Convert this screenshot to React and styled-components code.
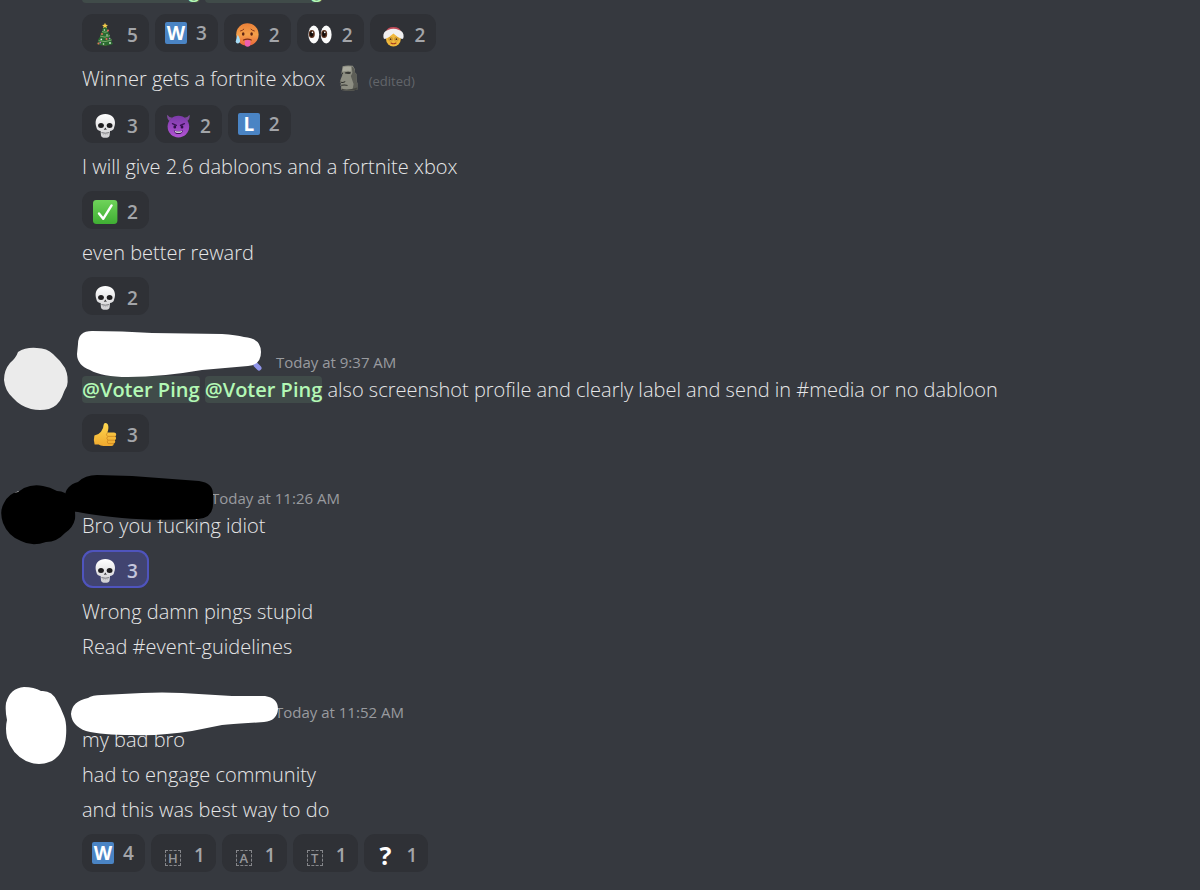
import React from 'react'
import styled, { createGlobalStyle } from 'styled-components'

const GlobalStyle = createGlobalStyle`
  * { box-sizing: border-box; }
  body { margin: 0; background: #36393f; color: #e6e7e8; font-family: 'Open Sans', sans-serif; font-size: 20px; }
`

// emoji

const Glyph = styled.svg`
  display: block;
  flex: none;
  width: 26px;
  height: 26px;
`

const Tree = () => (
  <Glyph viewBox='0 0 26 26'>
    <rect x='11.5' y='20' width='3' height='4' fill='#7a4a2a' />
    <path d='M13 3 L16 8 L15.3 8.4 L18 13 L17 13.4 L20 18 L19 18.6 L21 22 Q13 25.5 4.5 22 L7 18.4 L6 17.8 L9 13.2 L8 12.6 L10.6 8.4 L10 8 Z' fill='#2b6b31' />
    <path d='M10 9.5 Q13 11 16 9.5 M8 14 Q13 16.5 18 13.6 M6.5 18.6 Q13 21 19.6 18' stroke='#77a968' strokeWidth='1' fill='none' />
    <path d='M13 .8 L13.9 2.7 L16 2.9 L14.4 4.2 L14.9 6.2 L13 5.1 L11.1 6.2 L11.6 4.2 L10 2.9 L12.1 2.7 Z' fill='#f6cc4b' />
    <g fill='#e9685b'><circle cx='16' cy='8.5' r='1' /><circle cx='10' cy='12' r='1' /><circle cx='14.5' cy='17' r='1' /><circle cx='6.5' cy='21.5' r='1' /></g>
    <g fill='#d8ead7'><circle cx='12.4' cy='8' r='.8' /><circle cx='15' cy='13' r='.8' /><circle cx='9.3' cy='17.3' r='.9' /><circle cx='18' cy='21' r='.9' /><circle cx='11.5' cy='22' r='.8' /></g>
    <g fill='#c36dd0'><circle cx='17.6' cy='16.6' r='.8' /><circle cx='8.3' cy='20.6' r='.8' /></g>
  </Glyph>
)

const LetterTile = styled.span`
  display: flex;
  flex: none;
  align-items: center;
  justify-content: center;
  width: 22px;
  height: 22px;
  border-radius: 2px;
  background: #4a84c4;
  color: #fff;
  font-size: 19px;
  font-weight: 700;
  line-height: 22px;
`

const Hot = () => (
  <Glyph viewBox='0 0 26 26'>
    <defs>
      <linearGradient id='hot' x1='0' y1='0' x2='0' y2='1'>
        <stop offset='0' stopColor='#eb8038' /><stop offset='.5' stopColor='#f5a04a' /><stop offset='1' stopColor='#e8663a' />
      </linearGradient>
    </defs>
    <circle cx='13.4' cy='12.5' r='11.2' fill='url(#hot)' />
    <path d='M6.5 9 Q8.5 8.6 9.8 7.2 M17 7.2 Q18.3 8.6 20.3 9' stroke='#8a3a1c' strokeWidth='1' fill='none' strokeLinecap='round' />
    <ellipse cx='9.2' cy='12' rx='1.3' ry='1.8' fill='#5e2414' />
    <ellipse cx='17.6' cy='12' rx='1.3' ry='1.8' fill='#5e2414' />
    <path d='M9.6 18 Q13.4 16.2 17.2 18' stroke='#7d2d17' strokeWidth='1.3' fill='none' strokeLinecap='round' />
    <path d='M10.8 18.4 Q13.5 17.4 16.4 18.4 V21.5 Q16.4 24.8 13.6 24.8 Q10.8 24.8 10.8 21.5 Z' fill='#ee5fb0' />
    <path d='M3.8 12.8 Q6.3 17 6 19.2 Q5.6 21.6 3.8 21.6 Q1.8 21.4 1.8 19.2 Q2 16.8 3.8 12.8 Z' fill='#a6dcf6' />
  </Glyph>
)

const Eyes = () => (
  <Glyph viewBox='0 0 26 26'>
    <ellipse cx='6.8' cy='12.5' rx='5.4' ry='9' fill='#fbfbfb' />
    <ellipse cx='19.2' cy='12.5' rx='5.4' ry='9' fill='#fbfbfb' />
    <ellipse cx='4.8' cy='12' rx='3' ry='4' fill='#5e3421' />
    <ellipse cx='17.2' cy='12' rx='3' ry='4' fill='#5e3421' />
    <ellipse cx='4.6' cy='12' rx='1.8' ry='2.7' fill='#120c0a' />
    <ellipse cx='17' cy='12' rx='1.8' ry='2.7' fill='#120c0a' />
    <circle cx='5.4' cy='10.4' r='.8' fill='#fff' />
    <circle cx='17.8' cy='10.4' r='.8' fill='#fff' />
  </Glyph>
)

const MrsClaus = () => (
  <Glyph viewBox='0 0 26 26'>
    <path d='M6 10 Q7 5 13.4 5 Q20 5 21 10 Z' fill='#c04a58' />
    <circle cx='13.4' cy='17' r='7.4' fill='#f0b83c' />
    <path d='M3.4 15 Q2.8 9.6 8 8 Q13.4 5.4 19 8 Q24 9.6 23.6 15 Q23.4 17.4 21.4 16.8 Q17.4 15.4 13.4 11.6 Q9.6 15.4 5.6 16.8 Q3.6 17.4 3.4 15 Z' fill='#f0eff0' />
    <circle cx='10.6' cy='17.2' r='2' fill='none' stroke='#b8862c' strokeWidth='.6' />
    <circle cx='16.4' cy='17.2' r='2' fill='none' stroke='#b8862c' strokeWidth='.6' />
    <circle cx='10.6' cy='17.2' r='.9' fill='#52321a' />
    <circle cx='16.4' cy='17.2' r='.9' fill='#52321a' />
    <path d='M11 21 Q13.5 22.6 16 21' stroke='#a3391f' strokeWidth='1.1' fill='none' strokeLinecap='round' />
  </Glyph>
)

const Skull = () => (
  <Glyph viewBox='0 0 26 26'>
    <defs>
      <linearGradient id='bone' x1='0' y1='0' x2='0' y2='1'>
        <stop offset='0' stopColor='#ffffff' /><stop offset='1' stopColor='#cfcfd2' />
      </linearGradient>
    </defs>
    <path d='M13.3 1 C19.4 1 23 4.8 23 9.8 C23 12.2 22.4 13.4 22 15 C21.6 17 20 17.6 18 18 L17.6 22.4 Q17.2 24.8 13.3 24.8 Q9.4 24.8 9 22.4 L8.6 18 C6.6 17.6 5 17 4.6 15 C4.2 13.4 3.6 12.2 3.6 9.8 C3.6 4.8 7.2 1 13.3 1 Z' fill='url(#bone)' />
    <ellipse cx='9' cy='12.6' rx='2.9' ry='2.5' fill='#1e1d1f' />
    <ellipse cx='17.6' cy='12.6' rx='2.9' ry='2.5' fill='#1e1d1f' />
    <path d='M13.3 14.6 L14.8 17 L13.3 16.6 L11.8 17 Z' fill='#2b2a2c' />
    <path d='M9.4 19.6 Q13.3 20.8 17.2 19.6' stroke='#77777b' strokeWidth='1' fill='none' />
    <path d='M11.4 20.4 V22 M13.3 20.6 V22.2 M15.2 20.4 V22' stroke='#a2a2a6' strokeWidth='.6' />
  </Glyph>
)

const Devil = () => (
  <Glyph viewBox='0 0 26 26'>
    <defs>
      <linearGradient id='devil' x1='0' y1='0' x2='0' y2='1'>
        <stop offset='0' stopColor='#7b3aa9' /><stop offset='1' stopColor='#b253d4' />
      </linearGradient>
    </defs>
    <path d='M2.2 1.8 Q1.6 5.6 4.4 8 L7.4 4.8 Q4 4.6 2.2 1.8 Z M24.6 1.8 Q25.2 5.6 22.4 8 L19.4 4.8 Q22.8 4.6 24.6 1.8 Z' fill='#7d4a9c' />
    <circle cx='13.4' cy='13.6' r='10.8' fill='url(#devil)' />
    <path d='M7.4 10.6 L11.4 12.4 M19.4 10.6 L15.4 12.4' stroke='#3a1257' strokeWidth='1.2' strokeLinecap='round' />
    <ellipse cx='9.8' cy='13.9' rx='1.4' ry='1.7' fill='#2f0f49' />
    <ellipse cx='17' cy='13.9' rx='1.4' ry='1.7' fill='#2f0f49' />
    <path d='M8.8 17.4 Q13.4 18.8 18 17.4 Q17.2 21 13.4 21 Q9.6 21 8.8 17.4 Z' fill='#3a1257' />
    <path d='M9.6 18 Q13.4 19 17.2 18 L16.6 19.2 Q13.4 20.2 10.2 19.2 Z' fill='#fff' />
  </Glyph>
)

const Check = () => (
  <Glyph viewBox='0 0 26 26'>
    <defs>
      <linearGradient id='check' x1='0' y1='0' x2='0' y2='1'>
        <stop offset='0' stopColor='#6fd35a' /><stop offset='1' stopColor='#3fae33' />
      </linearGradient>
    </defs>
    <rect x='1' y='1' width='24.4' height='24' rx='3.4' fill='url(#check)' />
    <path d='M7 14.4 L11.2 19.8 L19.6 6.4' stroke='#fff' strokeWidth='2.4' fill='none' strokeLinecap='round' strokeLinejoin='round' />
  </Glyph>
)

const Thumb = () => (
  <Glyph viewBox='0 0 26 26'>
    <defs>
      <linearGradient id='thumb' x1='0' y1='0' x2='0' y2='1'>
        <stop offset='0' stopColor='#ffd850' /><stop offset='1' stopColor='#f0a92e' />
      </linearGradient>
    </defs>
    <path d='M2.4 13.4 Q6.6 13 9 9.8 Q11.6 6.6 11.6 3 Q11.8 .8 13.8 1 Q16.6 1.4 16.4 6 Q16.2 8.6 15.4 10.6 H22 Q24.2 10.8 24.2 12.6 Q24.2 13.8 23.2 14.4 Q24.4 15.2 24 16.8 Q23.8 17.8 22.8 18.2 Q23.6 19.2 23 20.4 Q22.6 21.4 21.6 21.6 Q22 23.8 19.4 24 H11.4 Q8.4 24 6.6 22.6 H2.6 Q1.2 18 2.4 13.4 Z' fill='url(#thumb)' />
    <path d='M16 14.4 H23.2 M16 18.2 H22.8 M16 21.6 H21.6 M15.4 10.6 Q13.4 13 15.6 14.4 Q14 16.4 15.8 18.2 Q14.6 20 16 21.6' stroke='#cd8620' strokeWidth='.8' fill='none' />
  </Glyph>
)

const MoaiGlyph = styled.svg`
  width: 20px;
  height: 26px;
  margin: 3px 4px 0 9px;
  vertical-align: -5px;
`

const Moai = () => (
  <MoaiGlyph viewBox='0 0 20 26'>
    <path d='M3.6 1.2 Q8 -.2 13.8 .8 Q16 3 16 7.6 L17.4 9 L17.6 16.4 L18.4 18 L18.4 24.4 Q11 26.8 2.6 25 Q1.6 23.4 2.4 21.8 L1.4 20.2 L2 18.6 L.8 17.4 Q1.8 13.4 3.4 10 L2.4 8.2 Z' fill='#8d8e82' />
    <path d='M12.6 1 Q16 3 16 7.6 L17.4 9 L17.6 16.4 L18.4 18 V24.4 L13.4 25.6 L14.6 19 L11.8 11 L13.4 8 Z' fill='#5d5e57' />
    <path d='M4.2 2.2 Q8 1 12 1.8 L11.8 6 Q7 5.2 3.6 6.6 Z' fill='#a9aa9d' />
    <path d='M5.6 7.4 Q9 6.2 12 7.2 L11.4 8.8 Q8.6 9.4 6 8.6 Z M2.8 7.8 L4.2 7.6 L4 9 L3.2 9.4 Z' fill='#383935' />
    <path d='M1 16.6 Q3.6 17.8 6.4 16 L6 17.2 Q3.6 18.4 1.4 17.6 Z M2.2 19.8 Q6 19 8.8 20 L8.4 20.8 Q5 20.4 2.2 20.8 Z' fill='#2c2d2a' />
    <path d='M2.6 23.6 Q8 26 18.4 22.4 V24.4 Q11 26.8 2.6 25 Z' fill='#454641' />
  </MoaiGlyph>
)

const BoxedLetter = styled.span`
  display: flex;
  flex: none;
  align-items: center;
  justify-content: center;
  width: 16px;
  height: 16px;
  margin: 6px 4px 0;
  border: 1px dashed #85868a;
  color: #96979b;
  font-size: 13px;
  line-height: 14px;
`

const Question = styled.span`
  flex: none;
  width: 24px;
  color: #fff;
  font-size: 25px;
  font-weight: 700;
  line-height: 26px;
  text-align: center;
`

// chat

const Chat = styled.main`
  min-height: 100vh;
  overflow: hidden;
  background: #36393f;
`

const Group = styled.section`
  display: grid;
  grid-template-columns: 82px 1fr;
  margin-top: ${({ $space }) => $space}px;
`

const Avatar = styled.svg`
  display: block;
  width: 82px;
  height: 80px;
  overflow: visible;
`

const Body = styled.div`
  grid-column: 2;
  min-width: 0;
`

const Header = styled.header`
  display: flex;
  align-items: center;
  height: 25px;
`

const Name = styled.span`
  position: relative;
  flex: none;
  align-self: stretch;
  width: ${({ $width }) => $width}px;
`

const Scribble = styled.svg`
  position: absolute;
  top: 0;
  left: 0;
  width: 100%;
  height: 100%;
  overflow: visible;
`

const Time = styled.time`
  padding-top: 3px;
  color: #999b9f;
  font-size: 15px;
  line-height: 22px;
`

const Message = styled.article`
  padding: 3px 0 4px;
`

const Text = styled.p`
  margin: 0;
  font-weight: 300;
  line-height: 28px;
`

const Mention = styled.a`
  border-radius: 4px;
  background: #404b49;
  color: #b3f8b5;
  font-weight: 600;
  text-decoration: none;
`

const Edited = styled.small`
  color: #62656a;
  font-size: 13px;
  font-weight: 400;
`

const Reactions = styled.div`
  display: flex;
  flex-wrap: wrap;
  gap: 6px;
  margin: 10px 0 3px;
`

const Pill = styled.button`
  display: flex;
  align-items: center;
  gap: 9px;
  height: 38px;
  padding: ${({ $tile }) => $tile ? 0 : 3}px 11px 0 10px;
  border: 0;
  border-radius: 11px;
  background: ${({ $active }) => $active ? '#414470' : '#2f3136'};
  box-shadow: ${({ $active }) => $active ? 'inset 0 0 0 2px #4f54bd' : 'none'};
  color: ${({ $active }) => $active ? '#c4c6dc' : '#a3a5a9'};
  font-family: inherit;
  font-size: 19px;
  font-weight: 600;
  line-height: 26px;
`

const Reaction = ({ icon, count, tile, active }) => (
  <Pill type='button' $tile={tile} $active={active} aria-pressed={!!active}>
    {icon}
    <span>{count}</span>
  </Pill>
)

const W = <LetterTile>W</LetterTile>
const L = <LetterTile>L</LetterTile>

const App = () => (
  <>
    <GlobalStyle />
    <Chat>
      <Group $space={-27}>
        <Body>
          <Message>
            <Text><Mention href='#voter'>@Voter Ping</Mention> <Mention href='#voter'>@Voter Ping</Mention></Text>
            <Reactions>
              <Reaction icon={<Tree />} count={5} />
              <Reaction icon={W} count={3} tile />
              <Reaction icon={<Hot />} count={2} />
              <Reaction icon={<Eyes />} count={2} />
              <Reaction icon={<MrsClaus />} count={2} />
            </Reactions>
          </Message>
          <Message>
            <Text>Winner gets a fortnite xbox <Moai /> <Edited>(edited)</Edited></Text>
            <Reactions>
              <Reaction icon={<Skull />} count={3} />
              <Reaction icon={<Devil />} count={2} />
              <Reaction icon={L} count={2} tile />
            </Reactions>
          </Message>
          <Message>
            <Text>I will give 2.6 dabloons and a fortnite xbox</Text>
            <Reactions>
              <Reaction icon={<Check />} count={2} />
            </Reactions>
          </Message>
          <Message>
            <Text>even better reward</Text>
            <Reactions>
              <Reaction icon={<Skull />} count={2} />
            </Reactions>
          </Message>
        </Body>
      </Group>

      <Group $space={26}>
        <Avatar viewBox='0 0 82 80'>
          <path d='M18 4 Q26 -1 37 0 Q47 0 53 6 Q60 12 65 20 Q69 29 67 38 Q64 43 62 49 Q58 58 49 61 Q40 63 31 61 Q20 58 13 50 Q5 43 4 32 Q4 22 10 15 Q16 10 18 4 Z' fill='#ebebeb' />
        </Avatar>
        <Body>
          <Header>
            <Name $width={194}>
              <Scribble viewBox='0 0 194 25'>
                <path d='M174 17 L177 20' stroke='#8f94e8' strokeWidth='5' strokeLinecap='round' />
                <path d='M-4 -4 Q-4 -17 10 -17 Q40 -17 70 -15 L140 -14 Q154 -13 162 -11 Q179 -10 179 4 Q179 17 166 18 L120 22 Q80 29 46 29 Q20 29 8 22 Q-5 17 -5 6 Z' fill='#fff' />
              </Scribble>
            </Name>
            <Time>Today at 9:37 AM</Time>
          </Header>
          <Message>
            <Text>
              <Mention href='#voter'>@Voter Ping</Mention> <Mention href='#voter'>@Voter Ping</Mention> also screenshot profile and clearly label and send in #media or no dabloon
            </Text>
            <Reactions>
              <Reaction icon={<Thumb />} count={3} />
            </Reactions>
          </Message>
        </Body>
      </Group>

      <Group $space={25}>
        <Avatar viewBox='0 0 82 80'>
          <path d='M15 10 L19 8' stroke='#d8d8d8' strokeWidth='2' />
          <path d='M24 4 Q33 0 43 2 Q50 3 57 7 Q66 7 71 15 Q76 24 75 35 Q73 44 65 49 Q57 58 46 58 Q32 63 21 57 Q8 52 3 39 Q-1 27 4 19 Q9 9 18 8 Z' fill='#000' />
        </Avatar>
        <Body>
          <Header>
            <Name $width={129}>
              <Scribble viewBox='0 0 129 25'>
                <path d='M-17 15 Q-18 2 -4 -2 Q3 -9 15 -9 L50 -8 L117 -3 Q131 -1 131 10 L131 20 Q131 34 116 35 Q70 37 40 34 Q10 31 -4 28 L-14 27 Z' fill='#000' />
              </Scribble>
            </Name>
            <Time>Today at 11:26 AM</Time>
          </Header>
          <Message>
            <Text>Bro you fucking idiot</Text>
            <Reactions>
              <Reaction icon={<Skull />} count={3} active />
            </Reactions>
          </Message>
          <Message><Text>Wrong damn pings stupid</Text></Message>
          <Message><Text>Read #event-guidelines</Text></Message>
        </Body>
      </Group>

      <Group $space={33}>
        <Avatar viewBox='0 0 82 80'>
          <path d='M6 5 Q10 -10 24 -11 Q34 -11 41 -7 Q52 -8 57 3 Q61 10 64 18 Q67 25 66 38 Q65 55 52 63 Q39 69 26 63 Q12 56 7 40 Q5 30 7 22 Q5 13 6 5 Z' fill='#fff' />
        </Avatar>
        <Body>
          <Header>
            <Name $width={193}>
              <Scribble viewBox='0 0 193 25'>
                <path d='M-11 16 Q-10 3 6 0 Q10 -3 20 -3 L60 -5 Q80 -6 100 -5 L150 -2 L183 -2 Q196 0 196 11 Q195 23 182 24 L166 25 Q150 26 140 27 L110 33 Q80 38 50 37 Q20 37 4 33 Q-10 28 -11 16 Z' fill='#fff' />
              </Scribble>
            </Name>
            <Time>Today at 11:52 AM</Time>
          </Header>
          <Message><Text>my bad bro</Text></Message>
          <Message><Text>had to engage community</Text></Message>
          <Message>
            <Text>and this was best way to do</Text>
            <Reactions>
              <Reaction icon={W} count={4} tile />
              <Reaction icon={<BoxedLetter>H</BoxedLetter>} count={1} />
              <Reaction icon={<BoxedLetter>A</BoxedLetter>} count={1} />
              <Reaction icon={<BoxedLetter>T</BoxedLetter>} count={1} />
              <Reaction icon={<Question>?</Question>} count={1} />
            </Reactions>
          </Message>
        </Body>
      </Group>
    </Chat>
  </>
)

export default App
